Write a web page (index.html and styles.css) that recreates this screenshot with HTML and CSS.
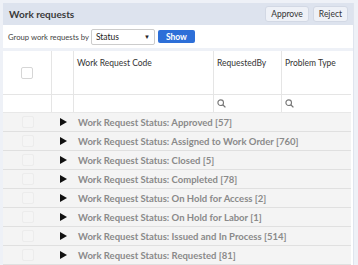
FILE: index.html
```html
<!DOCTYPE html>
<html lang="en">
<head>
    <meta charset="UTF-8">
    <title>Work requests</title>
    <link rel="stylesheet" href="styles.css">
</head>
<body>
<div class="panel">
    <div class="panel-header">
        <span class="panel-title">Work requests</span>
        <div class="actions">
            <button class="btn">Approve</button>
            <button class="btn">Reject</button>
        </div>
    </div>
    <div class="toolbar">
        <span>Group work requests by</span>
        <div class="select">Status <span class="caret">&#9660;</span></div>
        <button class="btn-show">Show</button>
    </div>
    <div class="grid">
        <div class="row head">
            <div class="cell c-check"><span class="box"></span></div>
            <div class="cell c-tree"></div>
            <div class="cell c-code">Work Request Code</div>
            <div class="cell c-by">RequestedBy</div>
            <div class="cell c-type">Problem Type</div>
        </div>
        <div class="row filter">
            <div class="cell c-check"></div>
            <div class="cell c-tree"></div>
            <div class="cell c-code"></div>
            <div class="cell c-by"><svg class="search" width="9" height="9" viewBox="0 0 9 9"><circle cx="3.7" cy="3.7" r="2.8" fill="none" stroke="#777" stroke-width="1.1"/><line x1="5.8" y1="5.8" x2="8.4" y2="8.4" stroke="#777" stroke-width="1.3"/></svg></div>
            <div class="cell c-type"><svg class="search" width="9" height="9" viewBox="0 0 9 9"><circle cx="3.7" cy="3.7" r="2.8" fill="none" stroke="#777" stroke-width="1.1"/><line x1="5.8" y1="5.8" x2="8.4" y2="8.4" stroke="#777" stroke-width="1.3"/></svg></div>
        </div>
        <div class="row group"><div class="cell c-check"><span class="box faint"></span></div><div class="cell c-tree"><span class="arrow"></span></div><div class="label">Work Request Status: Approved [57]</div></div>
        <div class="row group"><div class="cell c-check"><span class="box faint"></span></div><div class="cell c-tree"><span class="arrow"></span></div><div class="label">Work Request Status: Assigned to Work Order [760]</div></div>
        <div class="row group"><div class="cell c-check"><span class="box faint"></span></div><div class="cell c-tree"><span class="arrow"></span></div><div class="label">Work Request Status: Closed [5]</div></div>
        <div class="row group"><div class="cell c-check"><span class="box faint"></span></div><div class="cell c-tree"><span class="arrow"></span></div><div class="label">Work Request Status: Completed [78]</div></div>
        <div class="row group"><div class="cell c-check"><span class="box faint"></span></div><div class="cell c-tree"><span class="arrow"></span></div><div class="label">Work Request Status: On Hold for Access [2]</div></div>
        <div class="row group"><div class="cell c-check"><span class="box faint"></span></div><div class="cell c-tree"><span class="arrow"></span></div><div class="label">Work Request Status: On Hold for Labor [1]</div></div>
        <div class="row group"><div class="cell c-check"><span class="box faint"></span></div><div class="cell c-tree"><span class="arrow"></span></div><div class="label">Work Request Status: Issued and In Process [514]</div></div>
        <div class="row group"><div class="cell c-check"><span class="box faint"></span></div><div class="cell c-tree"><span class="arrow"></span></div><div class="label">Work Request Status: Requested [81]</div></div>
    </div>
</div>
</body>
</html>
```
FILE: styles.css
```css
body {
    margin: 0;
    padding: 3px 0 0 3px;
    background-color: #eef1f7;
    font-family: Lato, "Liberation Sans", sans-serif;
    color: #333;
    overflow: hidden;
    height: 262px;
}
.panel {
    width: 350px;
    background-color: #fff;
    border-right: 1px solid #dfe4ee;
}
.panel-header {
    display: flex;
    align-items: center;
    justify-content: space-between;
    height: 22px;
    padding: 0 5px 0 6px;
    background-color: #dde3ee;
}
.panel-title {
    font-size: 10px;
    font-weight: 700;
    color: #3a3a3a;
}
.actions {
    display: flex;
    gap: 4px;
}
.btn {
    height: 16px;
    padding: 0 5px;
    border: 1px solid #d2d8e4;
    border-radius: 3px;
    background-color: #eef1f7;
    font-family: Lato, "Liberation Sans", sans-serif;
    font-size: 8.5px;
    color: #333;
}
.toolbar {
    display: flex;
    align-items: center;
    height: 23px;
    padding: 0 5px;
    font-size: 7.7px;
    color: #444;
    border-bottom: 3px solid #eef1f7;
}
.select {
    display: flex;
    justify-content: space-between;
    align-items: center;
    width: 54px;
    height: 14px;
    margin-left: 2px;
    padding: 0 4px;
    border: 1px solid #ccc;
    border-radius: 2px;
    font-size: 8.5px;
    color: #222;
}
.caret {
    font-size: 6px;
}
.btn-show {
    height: 13px;
    margin-left: 3px;
    padding: 0 8px;
    border: none;
    border-radius: 2px;
    background-color: #2d6fd8;
    color: #fff;
    font-family: Lato, "Liberation Sans", sans-serif;
    font-size: 8.5px;
    font-weight: 700;
}
.grid {
    width: 348px;
}
.row {
    display: flex;
    border-bottom: 1px solid #e5e5e5;
}
.cell {
    box-sizing: border-box;
    border-right: 1px solid #e5e5e5;
    font-size: 8.5px;
    color: #333;
}
.c-check { width: 49px; display: flex; align-items: center; justify-content: center; }
.c-tree { width: 22px; display: flex; align-items: center; justify-content: center; }
.c-code { width: 140px; }
.c-by { width: 68px; }
.c-type { width: 69px; border-right: none; }
.head {
    height: 43px;
}
.head .c-code, .head .c-by, .head .c-type {
    padding: 7px 0 0 3px;
}
.box {
    width: 10px;
    height: 10px;
    border: 1px solid #d6d6d6;
    border-radius: 2px;
    background-color: #fff;
}
.box.faint {
    border-color: #ececec;
    background-color: #f5f5f5;
}
.filter {
    height: 17px;
    border-bottom: 1px solid #e8e8e8;
}
.filter .c-by, .filter .c-type {
    display: flex;
    align-items: center;
    padding-left: 3px;
}
.group {
    height: 18px;
    background-color: #f4f4f4;
    border-bottom: 1px solid #e0e0e0;
}
.group .cell {
    border-right: none;
}
.arrow {
    width: 0;
    height: 0;
    border-top: 4px solid transparent;
    border-bottom: 4px solid transparent;
    border-left: 7px solid #111;
}
.label {
    display: flex;
    align-items: center;
    padding-left: 4px;
    font-size: 9.5px;
    font-weight: 700;
    color: #8a8a8a;
}
```
